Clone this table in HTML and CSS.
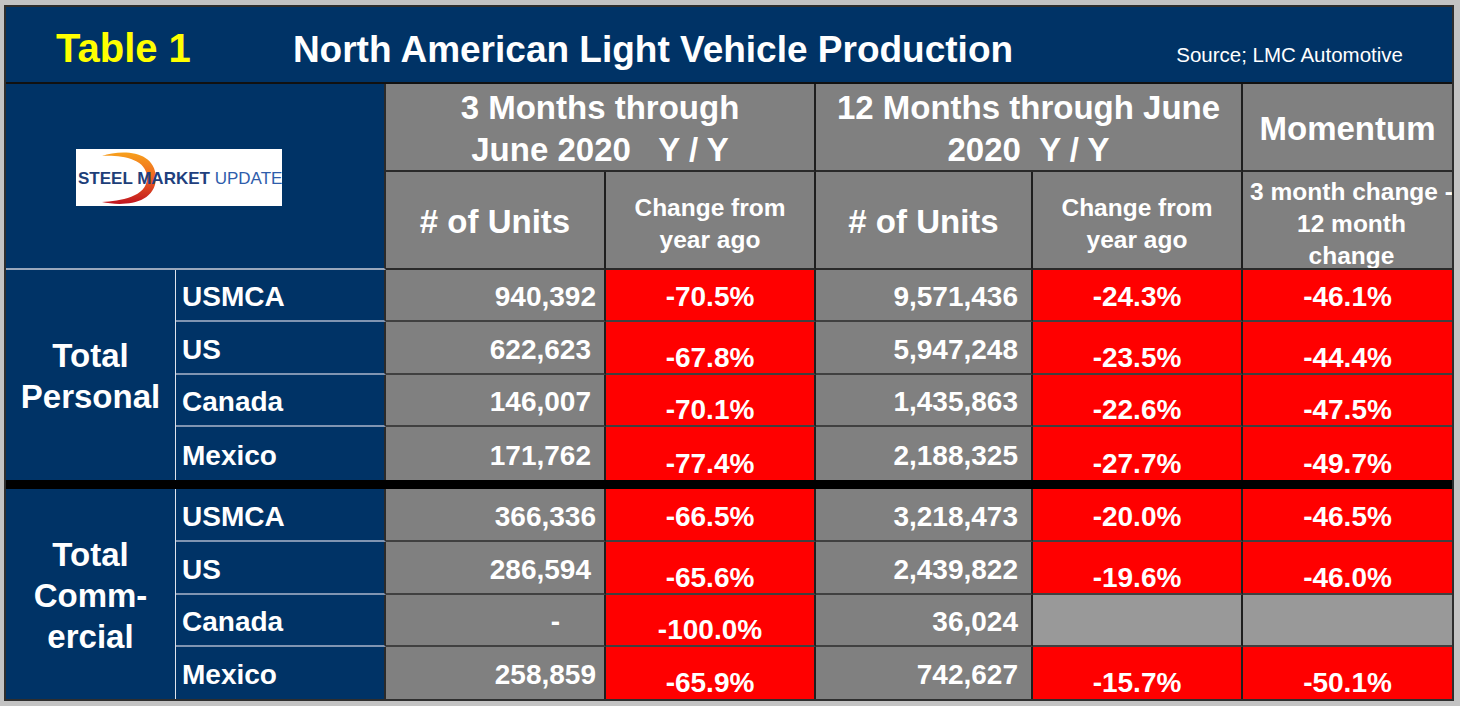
FILE: index.html
```html
<!DOCTYPE html>
<html>
<head>
<meta charset="utf-8">
<link rel="stylesheet" href="styles.css">
</head>
<body>
<div class="sheet">
  <div class="titlebar">
    <span class="t1">Table 1</span>
    <span class="tmain">North American Light Vehicle Production</span>
    <span class="src">Source; LMC Automotive</span>
  </div>
  <div class="grid">
    <div class="logo">
      <svg class="logo-svg" width="206" height="57" viewBox="0 0 206 57">
        <defs>
          <linearGradient id="arc" x1="0" y1="0" x2="0" y2="1">
            <stop offset="0" stop-color="#f7a01c"/>
            <stop offset="0.45" stop-color="#ef6a22"/>
            <stop offset="1" stop-color="#c0141f"/>
          </linearGradient>
        </defs>
        <rect width="206" height="57" fill="#fff"/>
        <path d="M26 7 C44 1 79 0 80 29 C79 57 44 57 26 53 C44 52 71 48 71 29 C71 9 44 6 26 7 Z" fill="url(#arc)"/>
        <text x="2" y="35" font-family="Liberation Sans, Arial, sans-serif" font-size="17" font-weight="bold" fill="#1d3e78">STEEL <tspan fill="#213f7d">MARKET</tspan> <tspan font-weight="normal" fill="#2f5dab">UPDATE</tspan></text>
      </svg>
    </div>
    <div class="gh span2 big">3 Months through<br>June 2020&nbsp;&nbsp;&nbsp;Y / Y</div>
    <div class="gh span2 big">12 Months through June<br>2020&nbsp;&nbsp;Y / Y</div>
    <div class="gh big end">Momentum</div>
    <div class="gh big">#&nbsp;of Units</div>
    <div class="gh small">Change from<br>year ago</div>
    <div class="gh big">#&nbsp;of Units</div>
    <div class="gh small">Change from<br>year ago</div>
    <div class="gh small end mom">3 month change -<br>12 month<br>change</div>

    <div class="group g1">Total<br>Personal</div>
    <div class="row">
      <div class="ctry">USMCA</div><div class="num n3">940,392</div><div class="pct">-70.5%</div><div class="num n12">9,571,436</div><div class="pct">-24.3%</div><div class="pct end">-46.1%</div>
    </div>
    <div class="row">
      <div class="ctry">US</div><div class="num n3 ind">622,623</div><div class="pct low">-67.8%</div><div class="num n12">5,947,248</div><div class="pct low">-23.5%</div><div class="pct low end">-44.4%</div>
    </div>
    <div class="row">
      <div class="ctry">Canada</div><div class="num n3 ind">146,007</div><div class="pct low">-70.1%</div><div class="num n12">1,435,863</div><div class="pct low">-22.6%</div><div class="pct low end">-47.5%</div>
    </div>
    <div class="row last">
      <div class="ctry">Mexico</div><div class="num n3 ind">171,762</div><div class="pct low">-77.4%</div><div class="num n12">2,188,325</div><div class="pct low">-27.7%</div><div class="pct low end">-49.7%</div>
    </div>

    <div class="sep"></div>

    <div class="group g2">Total<br>Comm-<br>ercial</div>
    <div class="row">
      <div class="ctry">USMCA</div><div class="num n3">366,336</div><div class="pct">-66.5%</div><div class="num n12">3,218,473</div><div class="pct">-20.0%</div><div class="pct end">-46.5%</div>
    </div>
    <div class="row">
      <div class="ctry">US</div><div class="num n3 ind">286,594</div><div class="pct low">-65.6%</div><div class="num n12">2,439,822</div><div class="pct low">-19.6%</div><div class="pct low end">-46.0%</div>
    </div>
    <div class="row">
      <div class="ctry">Canada</div><div class="num n3 dash">-</div><div class="pct low">-100.0%</div><div class="num n12">36,024</div><div class="blank"></div><div class="blank end"></div>
    </div>
    <div class="row last">
      <div class="ctry">Mexico</div><div class="num n3">258,859</div><div class="pct low">-65.9%</div><div class="num n12">742,627</div><div class="pct low">-15.7%</div><div class="pct low end">-50.1%</div>
    </div>
  </div>
</div>
</body>
</html>
```

FILE: styles.css
```css
* { box-sizing: border-box; }
html, body { margin: 0; padding: 0; }
body {
  background: #c3c3c3;
  font-family: "Liberation Sans", Arial, sans-serif;
  font-weight: bold;
  width: 1460px;
  height: 706px;
  overflow: hidden;
}
.sheet {
  margin: 5px 0 0 4px;
  width: 1450px;
  border: 2px solid #2e2e2e;
  background: #003366;
}
.titlebar {
  height: 77px;
  border-bottom: 2px solid #111;
  display: flex;
  align-items: baseline;
  padding: 21px 49px 0 50px;
  white-space: nowrap;
}
.t1 { color: #ffff00; font-size: 40px; line-height: 40px; }
.tmain { color: #fff; font-size: 37px; margin-left: 102px; }
.src { color: #fff; font-size: 20.5px; font-weight: normal; margin-left: auto; }

.grid {
  display: grid;
  grid-template-columns: 170px 210px 220px 210px 217px 210px 209px;
  grid-template-rows: 88px 98px 52px 53px 52px 53px 9px 53px 53px 52px 52px;
}
.row { display: contents; }

.logo {
  grid-column: 1 / 3;
  grid-row: 1 / 3;
  border-bottom: 2px solid #9aa8bc;
  border-right: 2px solid #2a2a2a;
  display: flex;
  align-items: center;
  padding-left: 70px;
  padding-top: 3px;
}
.logo-svg { display: block; }

.gh {
  background: #808080;
  color: #fff;
  border-right: 2px solid #1e1e1e;
  border-bottom: 2px solid #2a2a2a;
  display: flex;
  align-items: center;
  justify-content: center;
  text-align: center;
  white-space: nowrap;
  overflow: hidden;
}
.span2 { grid-column: span 2; }
.big { font-size: 33px; line-height: 42px; padding-top: 4px; }
.small { font-size: 24.5px; line-height: 32px; padding-top: 7px; }
.mom { padding-left: 8px; padding-top: 8px; }
.end { border-right: 0 !important; }

.group {
  grid-column: 1;
  color: #fff;
  font-size: 33px;
  line-height: 41px;
  text-align: center;
  border-right: 1px solid #dde3ec;
  display: flex;
  align-items: center;
  justify-content: center;
  padding-top: 2px;
}
.g1 { grid-row: 3 / 7; }
.g2 { grid-row: 8 / 12; padding-top: 3px; }

.ctry, .num, .pct, .blank {
  display: flex;
  align-items: center;
  font-size: 28px;
  color: #fff;
  white-space: nowrap;
  padding-top: 4px;
}
.ctry {
  grid-column: 2;
  padding-left: 6px;
  border-bottom: 2px solid #8095b2;
  border-right: 2px solid #2a2a2a;
}
.num {
  background: #808080;
  justify-content: flex-end;
  border-right: 2px solid #1e1e1e;
  border-bottom: 2px solid #404040;
}
.n3 { padding-right: 8px; }
.n3.ind { padding-right: 13px; }
.n12 { padding-right: 13px; }
.n3.dash { padding-right: 44px; }
.pct {
  background: #ff0000;
  justify-content: center;
  border-right: 2px solid #1e1e1e;
  border-bottom: 2px solid #404040;
}
.pct.low { padding-top: 20px; }
.blank {
  background: #999999;
  border-right: 2px solid #1e1e1e;
  border-bottom: 2px solid #404040;
}
.last > div { border-bottom: 0; }
.sep { grid-column: 1 / -1; background: #000; }
```
